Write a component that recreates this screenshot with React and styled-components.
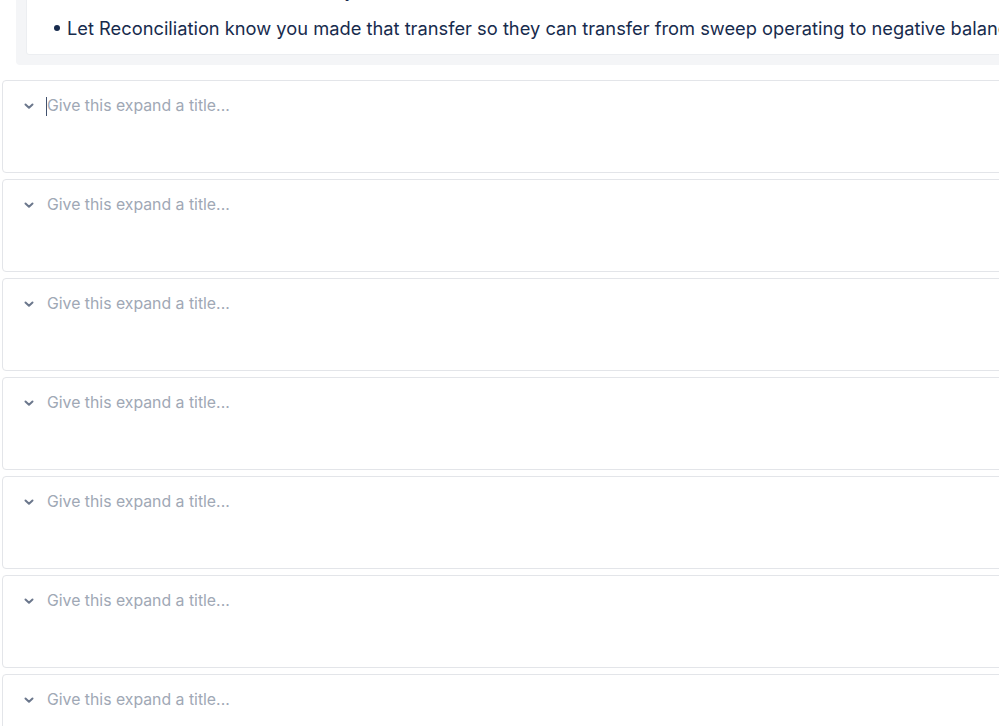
import React from "react";
import styled, { createGlobalStyle } from "styled-components";

const GlobalStyle = createGlobalStyle`
  html, body {
    margin: 0;
    padding: 0;
    background: #ffffff;
    overflow: hidden;
  }
  body {
    font-family: Inter, "Noto Sans", "Liberation Sans", sans-serif;
    -webkit-font-smoothing: antialiased;
  }
`;

const Page = styled.div`
  width: 1040px;
  height: 726px;
  overflow: hidden;
  display: flex;
  flex-direction: column;
`;

const Panel = styled.div`
  margin: -35px 0 0 16px;
  padding: 10px;
  background: #f4f5f7;
  border-radius: 4px;
`;

const PanelBody = styled.div`
  background: #ffffff;
  border: 1px solid #eceef1;
  border-radius: 3px;
  padding: 0 0 12px 0;
`;

const List = styled.ul`
  margin: 0;
  padding: 0 0 0 40px;
  list-style: none;
`;

const Item = styled.li`
  position: relative;
  height: 28px;
  line-height: 28px;
  font-size: 18.3px;
  color: #172b4d;
  white-space: nowrap;
  padding-top: ${(p) => p.$top || 0}px;

  &::before {
    content: "";
    position: absolute;
    left: -13px;
    top: ${(p) => (p.$top || 0) + 11}px;
    width: 6px;
    height: 6px;
    border-radius: 50%;
    background: #172b4d;
  }
`;

const Expands = styled.div`
  margin: 15px 0 0 2px;
  display: flex;
  flex-direction: column;
  gap: 6px;
`;

const Expand = styled.div`
  height: 93px;
  flex-shrink: 0;
  box-sizing: border-box;
  border: 1px solid #e3e5e9;
  border-radius: 4px;
  background: #ffffff;
`;

const Header = styled.div`
  display: flex;
  align-items: center;
  height: 24px;
  margin-top: 13px;
  padding-left: 20px;
`;

const Chevron = styled.svg`
  width: 12px;
  height: 12px;
  flex-shrink: 0;
  margin-right: 12px;
`;

const Title = styled.div`
  position: relative;
  font-size: 15.8px;
  color: #a0a8b5;
  line-height: 24px;
  white-space: nowrap;
`;

const Caret = styled.span`
  position: absolute;
  left: -1px;
  top: 3px;
  width: 1px;
  height: 19px;
  background: #42526e;
`;

const ChevronIcon = () => (
  <Chevron viewBox="0 0 12 12">
    <path
      d="M2.5 4.5 L6 7.8 L9.5 4.5"
      fill="none"
      stroke="#6b778c"
      strokeWidth="2"
      strokeLinecap="round"
      strokeLinejoin="round"
    />
  </Chevron>
);

const App = () => {
  const expands = [0, 1, 2, 3, 4, 5, 6];
  return (
    <Page>
      <GlobalStyle />
      <Panel>
        <PanelBody>
          <List>
            <Item $top={0}>Transfer the funds to the bank by</Item>
            <Item $top={10}>
              Let Reconciliation know you made that transfer so they can transfer from sweep operating to negative balance
            </Item>
          </List>
        </PanelBody>
      </Panel>
      <Expands>
        {expands.map((i) => (
          <Expand key={i}>
            <Header>
              <ChevronIcon />
              <Title>
                {i === 0 && <Caret />}
                Give this expand a title...
              </Title>
            </Header>
          </Expand>
        ))}
      </Expands>
    </Page>
  );
};

export default App;
